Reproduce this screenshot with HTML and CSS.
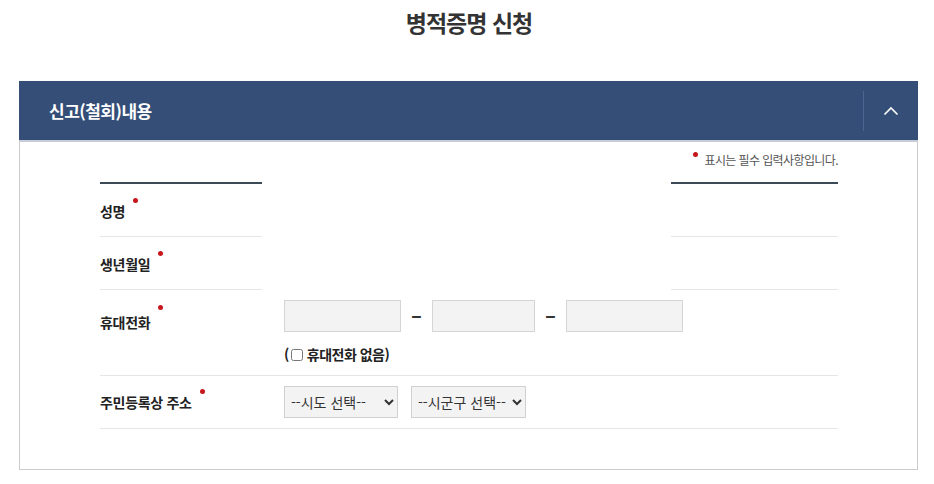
FILE: index.html
```html
<!DOCTYPE html>
<html lang="ko">

<head>
    <meta charset="UTF-8">
    <meta name="viewport" content="width=device-width, initial-scale=1.0">
    <title>병적증명 신청</title>
    <link rel="stylesheet" href="styles.css">
</head>

<body>
    <h1 class="page-title">병적증명 신청</h1>

    <div class="panel">
        <div class="panel-head">
            <h2 class="panel-title">신고(철회)내용</h2>
            <button class="panel-toggle" type="button" aria-label="접기">
                <svg width="16" height="10" viewBox="0 0 16 10">
                    <path d="M1.5 8.5 L8 2 L14.5 8.5" fill="none" stroke="#fff" stroke-width="1.6" />
                </svg>
            </button>
        </div>

        <div class="panel-body">
            <p class="req-note"><span class="req"></span>표시는 필수 입력사항입니다.</p>

            <div class="form-table">
                <div class="top-rule">
                    <span class="rule-left"></span>
                    <span class="rule-gap"></span>
                    <span class="rule-right"></span>
                </div>

                <div class="row row-split">
                    <div class="th">성명<span class="req"></span></div>
                    <div class="gap"></div>
                    <div class="side"></div>
                </div>

                <div class="row row-split">
                    <div class="th">생년월일<span class="req"></span></div>
                    <div class="gap"></div>
                    <div class="side"></div>
                </div>

                <div class="row row-phone">
                    <div class="th">휴대전화<span class="req"></span></div>
                    <div class="td">
                        <div class="phone">
                            <input class="inp inp-1" type="text">
                            <span class="dash">-</span>
                            <input class="inp inp-2" type="text">
                            <span class="dash">-</span>
                            <input class="inp inp-3" type="text">
                        </div>
                        <label class="no-phone">(<input type="checkbox"> 휴대전화 없음)</label>
                    </div>
                </div>

                <div class="row">
                    <div class="th">주민등록상 주소<span class="req"></span></div>
                    <div class="td td-select">
                        <select class="sel sel-1">
                            <option>--시도 선택--</option>
                        </select>
                        <select class="sel sel-2">
                            <option>--시군구 선택--</option>
                        </select>
                    </div>
                </div>
            </div>
        </div>
    </div>
</body>

</html>
```

FILE: styles.css
```css
body {
    margin: 0;
    padding: 0 15px 0 19px;
    font-family: "Noto Sans CJK KR", "Noto Sans", sans-serif;
    color: #222;
    background-color: #fff;
}

.page-title {
    margin: 0;
    padding-top: 4px;
    height: 77px;
    text-align: center;
    font-size: 23px;
    font-weight: bold;
    line-height: 36px;
    letter-spacing: -1px;
    color: #333;
}

.panel {
    width: 899px;
}

.panel-head {
    display: flex;
    align-items: center;
    height: 59px;
    background-color: #344e78;
}

.panel-title {
    flex: 1;
    margin: 0;
    padding-left: 30px;
    font-size: 17px;
    font-weight: bold;
    color: #fff;
    letter-spacing: -0.5px;
}

.panel-toggle {
    width: 55px;
    height: 40px;
    border: none;
    border-left: 1px solid #4c6590;
    background: transparent;
    display: flex;
    align-items: center;
    justify-content: center;
    padding: 0;
}

.panel-body {
    border: 1px solid #ccc;
    border-top: 2px solid #c6cdd8;
    padding: 9px 79px 40px 80px;
}

.req {
    display: inline-block;
    width: 5px;
    height: 5px;
    border-radius: 50%;
    background-color: #c8161d;
    vertical-align: top;
}

.req-note {
    margin: 0;
    text-align: right;
    font-size: 12px;
    line-height: 18px;
    color: #555;
    letter-spacing: -0.6px;
}

.req-note .req {
    margin: 1px 6px 0 0;
}

.form-table {
    margin-top: 13px;
}

.top-rule {
    display: flex;
    height: 2px;
}

.rule-left {
    width: 162px;
    background-color: #3c4a58;
}

.rule-gap {
    flex: 1;
}

.rule-right {
    width: 167px;
    background-color: #3c4a58;
}

.row {
    display: flex;
    border-bottom: 1px solid #e6e6e6;
}

.th {
    width: 162px;
    flex-shrink: 0;
    display: flex;
    align-items: center;
    font-size: 14px;
    font-weight: bold;
    color: #222;
    letter-spacing: -0.3px;
}

.th .req {
    margin: -22px 0 0 8px;
}

.row-split {
    border-bottom: none;
    height: 53px;
}

.row-split .th,
.row-split .side {
    border-bottom: 1px solid #e6e6e6;
}

.row-split .th {
    padding-top: 2px;
}

.row-split .gap {
    flex: 1;
}

.row-split .side {
    width: 167px;
}

.row-phone .th {
    align-items: flex-start;
    padding-top: 21px;
    line-height: 22px;
}

.row-phone .th .req {
    margin-top: -6px;
}

.td {
    flex: 1;
    padding: 10px 0 10px 22px;
}

.phone {
    display: flex;
    align-items: center;
}

.inp {
    height: 32px;
    box-sizing: border-box;
    border: 1px solid #d5d5d5;
    background-color: #f3f3f3;
    padding: 0 8px;
}

.inp-1 {
    width: 117px;
}

.inp-2 {
    width: 103px;
}

.inp-3 {
    width: 117px;
}

.dash {
    width: 31px;
    text-align: center;
    font-size: 20px;
    font-weight: bold;
    color: #333;
    transform: scaleX(1.6);
}

.no-phone {
    display: flex;
    align-items: center;
    margin-top: 11px;
    font-size: 14px;
    font-weight: bold;
    color: #222;
    letter-spacing: -0.5px;
    line-height: 22px;
}

.no-phone input {
    width: 12px;
    height: 12px;
    margin: 2px 4px 0 2px;
}

.td-select {
    display: flex;
    gap: 13px;
}

.sel {
    height: 32px;
    box-sizing: border-box;
    border: 1px solid #d0d0d0;
    background-color: #f3f3f3;
    font-family: "Noto Sans CJK KR", sans-serif;
    font-size: 14px;
    color: #333;
    padding: 0 2px;
}

.sel-1 {
    width: 114px;
}

.sel-2 {
    width: 115px;
}
```
